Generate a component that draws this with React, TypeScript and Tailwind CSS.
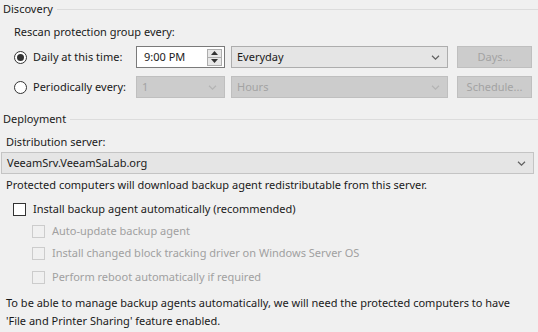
import React from 'react';

const font = { fontFamily: '"Noto Sans", "Open Sans", sans-serif' };

function Chevron({ disabled = false }: { disabled?: boolean }) {
  return (
    <svg width="9" height="5" viewBox="0 0 9 5" className="shrink-0">
      <path d="M1 0.8 L4.5 4.2 L8 0.8" fill="none" stroke={disabled ? '#b4b4b4' : '#606060'} strokeWidth="1.2" />
    </svg>
  );
}

function GroupHeader({ title }: { title: string }) {
  return (
    <div className="flex items-center h-4 pl-[3px]">
      <span className="pr-[4px]">{title}</span>
      <div className="flex-1 border-t border-[#dcdcdc]" />
    </div>
  );
}

function Radio({ checked }: { checked?: boolean }) {
  return (
    <span className="w-[13px] h-[13px] rounded-full border border-[#333] bg-white flex items-center justify-center shrink-0">
      {checked && <span className="w-[7px] h-[7px] rounded-full bg-[#333]" />}
    </span>
  );
}

function Check({ disabled = false }: { disabled?: boolean }) {
  return (
    <span
      className={
        disabled
          ? 'w-[13px] h-[13px] border border-[#cccccc] bg-[#f0f0f0] shrink-0'
          : 'w-[13px] h-[13px] border border-[#333] bg-white shrink-0'
      }
    />
  );
}

export default function App() {
  return (
    <div className="w-[538px] h-[332px] bg-[#f0f0f0] text-[11px] leading-4 text-[#1a1a1a] overflow-hidden" style={font}>
      <div className="pt-[1px]">
        <GroupHeader title="Discovery" />
      </div>

      <div className="ml-[14px] mt-[7px] h-4 flex items-center">Rescan protection group every:</div>

      {/* daily row */}
      <div className="flex items-center pl-[14px] mt-[6px] h-[22px]">
        <div className="flex items-center gap-[6px] w-[122px]">
          <Radio checked />
          <span>Daily at this time:</span>
        </div>
        <div className="w-[89px] h-[22px] bg-white border border-[#7a7a7a] flex items-center justify-between pl-[7px] pr-[2px]">
          <span>9:00 PM</span>
          <div className="flex flex-col w-[15px] h-[17px] border border-[#adadad] bg-[#e8e8e8]">
            <div className="flex-1 flex items-center justify-center border-b border-[#adadad]">
              <svg width="7" height="4" viewBox="0 0 7 4"><path d="M0 4 L3.5 0 L7 4Z" fill="#333" /></svg>
            </div>
            <div className="flex-1 flex items-center justify-center">
              <svg width="7" height="4" viewBox="0 0 7 4"><path d="M0 0 L3.5 4 L7 0Z" fill="#333" /></svg>
            </div>
          </div>
        </div>
        <div className="ml-[6px] w-[217px] h-[22px] bg-[#e5e5e5] border border-[#adadad] flex items-center justify-between pl-[5px] pr-[7px]">
          <span>Everyday</span>
          <Chevron />
        </div>
        <div className="ml-[9px] w-[75px] h-[22px] bg-[#cccccc] border border-[#bfbfbf] flex items-center justify-center text-[#a3a3a3]">
          Days...
        </div>
      </div>

      {/* periodic row */}
      <div className="flex items-center pl-[14px] mt-[8px] h-[22px]">
        <div className="flex items-center gap-[6px] w-[122px]">
          <Radio />
          <span>Periodically every:</span>
        </div>
        <div className="w-[89px] h-[22px] bg-[#cccccc] border border-[#bfbfbf] flex items-center justify-between pl-[5px] pr-[7px] text-[#a3a3a3]">
          <span>1</span>
          <Chevron disabled />
        </div>
        <div className="ml-[6px] w-[217px] h-[22px] bg-[#cccccc] border border-[#bfbfbf] flex items-center justify-between pl-[5px] pr-[7px] text-[#a3a3a3]">
          <span>Hours</span>
          <Chevron disabled />
        </div>
        <div className="ml-[9px] w-[75px] h-[22px] bg-[#cccccc] border border-[#bfbfbf] flex items-center justify-center text-[#a3a3a3]">
          Schedule...
        </div>
      </div>

      <div className="mt-[13px]">
        <GroupHeader title="Deployment" />
      </div>

      <div className="ml-[6px] mt-[7px] h-4 flex items-center">Distribution server:</div>

      <div className="ml-[1px] mt-[2px] w-[533px] h-[22px] bg-[#e5e5e5] border border-[#c4c4c4] flex items-center justify-between pl-[5px] pr-[7px]">
        <span>VeeamSrv.VeeamSaLab.org</span>
        <Chevron />
      </div>

      <div className="ml-[6px] mt-[3px] h-4 flex items-center">
        Protected computers will download backup agent redistributable from this server.
      </div>

      <div className="ml-[13px] mt-[8px] h-4 flex items-center gap-[7px]">
        <Check />
        <span>Install backup agent automatically (recommended)</span>
      </div>

      <div className="pl-[32px] text-[#a0a0a0]">
        <div className="mt-[6px] h-4 flex items-center gap-[7px]">
          <Check disabled />
          <span>Auto-update backup agent</span>
        </div>
        <div className="mt-[6px] h-4 flex items-center gap-[7px]">
          <Check disabled />
          <span>Install changed block tracking driver on Windows Server OS</span>
        </div>
        <div className="mt-[8px] h-4 flex items-center gap-[7px]">
          <Check disabled />
          <span>Perform reboot automatically if required</span>
        </div>
      </div>

      <div className="ml-[6px] mt-[9px] leading-[18px]">
        To be able to manage backup agents automatically, we will need the protected computers to have
        <br />
        'File and Printer Sharing' feature enabled.
      </div>
    </div>
  );
}
